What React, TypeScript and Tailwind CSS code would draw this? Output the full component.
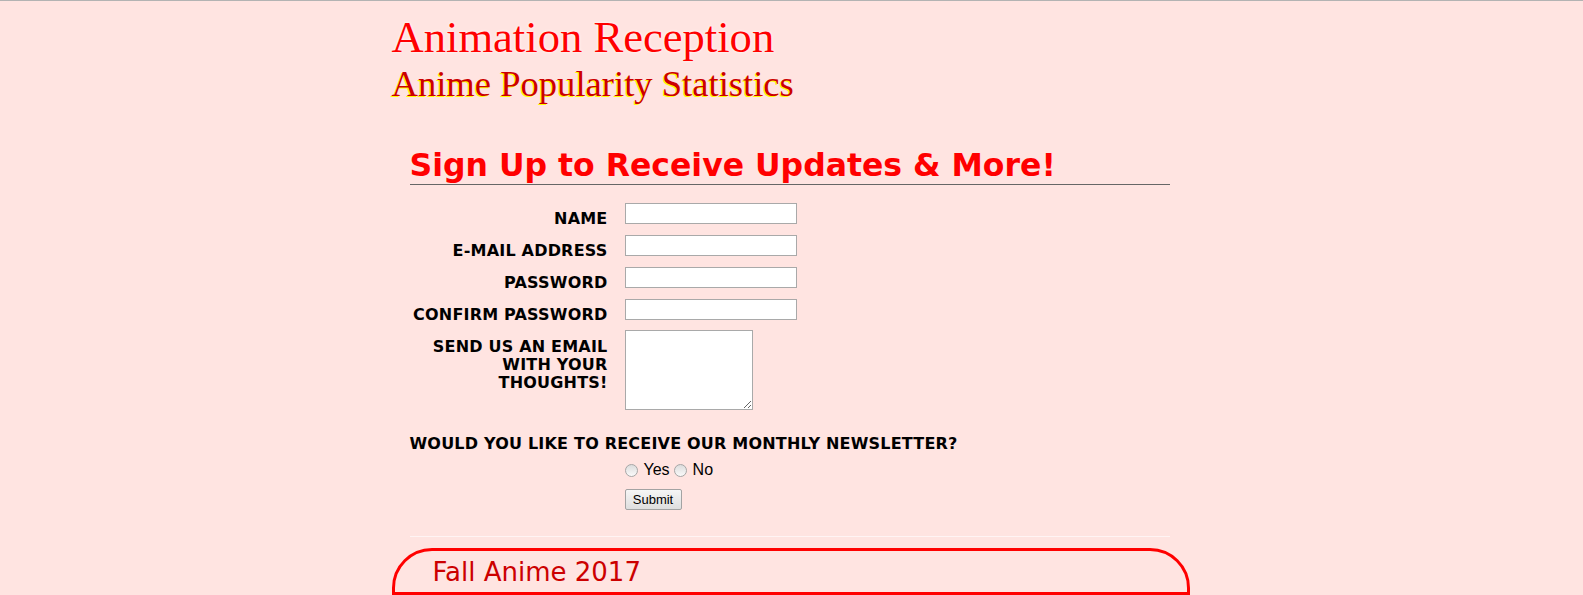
import React from "react";

const FIELDS = [
  { label: "NAME", type: "text", h: "h-[32px]" },
  { label: "E-MAIL ADDRESS", type: "email", h: "h-[32px]" },
  { label: "PASSWORD", type: "password", h: "h-[32px]" },
  { label: "CONFIRM PASSWORD", type: "password", h: "h-[31px]" },
];

const Radio = ({ label }: { label: string }) => (
  <label className="flex items-center">
    <span className="w-[13px] h-[13px] rounded-full border border-[#a6a6a6] bg-gradient-to-b from-[#dcdcdc] to-[#fafafa] mr-[6px]" />
    <span>{label}</span>
  </label>
);

const App = () => {
  return (
    <div className="min-h-screen bg-[#ffe4e1] border-t border-[#b3b3b3]">
      <div className="w-[800px] mx-auto pb-10">
        {/* header */}
        <header className="pt-[10px] font-['Liberation_Serif',serif]">
          <h1 className="text-[44.6px] leading-[52px] text-[#ff0000] [text-shadow:0_0_3px_#ffffff]">
            Animation Reception
          </h1>
          <h2 className="text-[36.6px] leading-[42px] text-[#cc0000] [text-shadow:-1px_1px_0_#ffff00]">
            Anime Popularity Statistics
          </h2>
        </header>

        {/* sign up form */}
        <section className="ml-[18px] mr-[22px] mt-[42px] font-['DejaVu_Sans',sans-serif]">
          <h2 className="text-[31.5px] leading-[37px] font-bold text-[#ff0000] border-b border-[#666666]">
            Sign Up to Receive Updates &amp; More!
          </h2>

          <form className="mt-[18px] tracking-[0.2px]" onSubmit={(e) => e.preventDefault()}>
            {FIELDS.map((f) => (
              <div key={f.label} className={`flex items-start gap-[17px] ${f.h}`}>
                <span className="w-[198px] text-right text-[16px] leading-[18px] font-bold text-black pt-[7px]">
                  {f.label}
                </span>
                <input
                  type={f.type}
                  className="w-[172px] h-[21px] bg-white border border-[#a9a9a9] px-1 text-[13px] outline-none"
                />
              </div>
            ))}

            <div className="flex items-start gap-[17px]">
              <span className="w-[198px] text-right text-[16px] leading-[18px] font-bold text-black pt-[8px]">
                SEND US AN EMAIL WITH YOUR THOUGHTS!
              </span>
              <textarea className="w-[128px] h-[80px] bg-white border border-[#a9a9a9] outline-none resize" />
            </div>

            <p className="mt-[22px] text-[16px] font-bold text-black">
              WOULD YOU LIKE TO RECEIVE OUR MONTHLY NEWSLETTER?
            </p>

            <div className="ml-[215px] mt-[2px] flex items-center gap-[4px] font-['Liberation_Sans',Arial,sans-serif] text-[16px] tracking-normal text-black">
              <Radio label="Yes" />
              <Radio label="No" />
            </div>

            <button
              type="submit"
              className="ml-[215px] mt-[7px] w-[57px] h-[21px] border border-[#a3a3a3] rounded-[2px] bg-gradient-to-b from-[#f6f6f6] to-[#dedede] font-['Liberation_Sans',Arial,sans-serif] text-[13px] tracking-normal text-black leading-none"
            >
              Submit
            </button>
          </form>

          <hr className="mt-[25px] border-0 border-t border-[#fff4f4]" />
        </section>

        {/* season box */}
        <section className="mt-[11px] mr-[2px] border-[3px] border-[#ff0000] rounded-t-[40px] font-['DejaVu_Sans',sans-serif]">
          <h3 className="pl-[38px] pt-[7px] pb-[6px] text-[26px] leading-[28px] text-[#cc0000] border-b-[3px] border-[#ff0000]">
            Fall Anime 2017
          </h3>
          <div className="h-[120px]" />
        </section>
      </div>
    </div>
  );
};

export default App;
